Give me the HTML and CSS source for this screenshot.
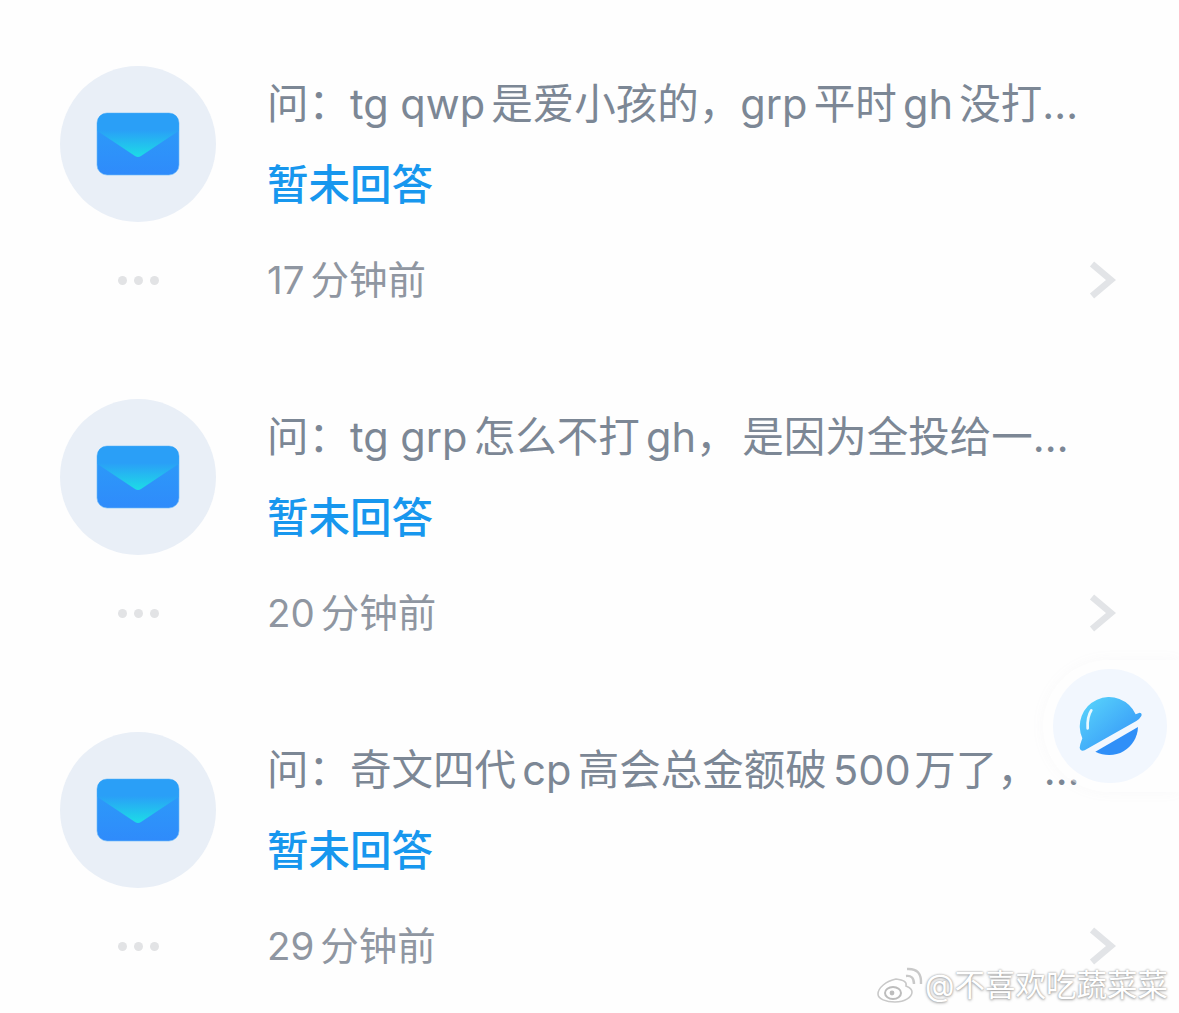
FILE: index.html
```html
<!DOCTYPE html>
<html lang="zh-CN">
<head>
<meta charset="utf-8">
<title>问答</title>
<link rel="stylesheet" href="styles.css">
</head>
<body>
<svg class="defs" width="0" height="0" aria-hidden="true">
  <defs>
    <linearGradient id="envBody" x1="0" y1="0" x2="0" y2="1"><stop offset="0" stop-color="#2b9ef8"/><stop offset="1" stop-color="#2f8bfb"/></linearGradient>
    <linearGradient id="envFlap" gradientUnits="userSpaceOnUse" x1="0" y1="18" x2="0" y2="46"><stop offset="0" stop-color="#2a9ff7"/><stop offset="1" stop-color="#1cdfe6"/></linearGradient>
    <linearGradient id="planetTop" gradientUnits="userSpaceOnUse" x1="170" y1="140" x2="300" y2="290"><stop offset="0" stop-color="#58d3fb"/><stop offset="1" stop-color="#3596f8"/></linearGradient>
    <symbol id="envelope" viewBox="0 0 84 64">
      <rect x="1" y="1" width="82" height="62" rx="10" fill="url(#envBody)" stroke="#6fbcf9" stroke-opacity=".6" stroke-width="1"/>
      <path d="M1.5 19 L39 44 Q42 46 45 44 L82.5 19 L82.5 11 Q82.5 1.5 73 1.5 L11 1.5 Q1.5 1.5 1.5 11 Z" fill="url(#envFlap)"/>
    </symbol>
    <symbol id="chevron" viewBox="0 0 28 40">
      <path d="M4 4 L23 20 L4 36" fill="none" stroke="#e2e4e7" stroke-width="6.5"/>
    </symbol>
  </defs>
</svg>
<main class="list">
  <article class="item">
    <div class="side">
      <div class="avatar"><svg class="mail"><use href="#envelope"/></svg></div>
      <div class="dots"><i></i><i></i><i></i></div>
    </div>
    <div class="body">
      <p class="question">问：tg qwp<span class="sp">&#8202;</span>是爱小孩的，grp<span class="sp">&#8202;</span>平时<span class="sp">&#8202;</span>gh<span class="sp">&#8202;</span>没打…</p>
      <p class="status">暂未回答</p>
      <div class="meta"><span class="time">17<span class="sp-t">&#8202;</span>分钟前</span><svg class="chev"><use href="#chevron"/></svg></div>
    </div>
  </article>
  <article class="item">
    <div class="side">
      <div class="avatar"><svg class="mail"><use href="#envelope"/></svg></div>
      <div class="dots"><i></i><i></i><i></i></div>
    </div>
    <div class="body">
      <p class="question">问：tg grp<span class="sp">&#8202;</span>怎么不打<span class="sp">&#8202;</span>gh，<span class="sp-l">&#8202;</span>是因为全投给一…</p>
      <p class="status">暂未回答</p>
      <div class="meta"><span class="time">20<span class="sp-t">&#8202;</span>分钟前</span><svg class="chev"><use href="#chevron"/></svg></div>
    </div>
  </article>
  <article class="item">
    <div class="side">
      <div class="avatar"><svg class="mail"><use href="#envelope"/></svg></div>
      <div class="dots"><i></i><i></i><i></i></div>
    </div>
    <div class="body">
      <p class="question">问：奇文四代<span class="sp">&#8202;</span>cp<span class="sp">&#8202;</span>高会总金额破<span class="sp">&#8202;</span>500&#8202;万了，<span class="sp-l">&#8202;</span>…</p>
      <p class="status">暂未回答</p>
      <div class="meta"><span class="time">29<span class="sp-t">&#8202;</span>分钟前</span><svg class="chev"><use href="#chevron"/></svg></div>
    </div>
  </article>
</main>
<div class="float">
  <div class="float-inner">
    <svg class="planet" viewBox="145 135 195 180" width="65" height="60">
      <path d="M158 262 A87 87 0 1 1 318 190 L330 185 Q338 186 335 195 Q330 204 320 210 L165 298 Q152 302 150 290 Q151 280 158 262 Z" fill="url(#planetTop)"/>
      <path d="M325 228 A87 87 0 0 1 197 302 Z" fill="#2f8ff8"/>
      <path d="M174 232 Q172 198 185 178" fill="none" stroke="#e8f9ff" stroke-width="8" stroke-linecap="round"/>
    </svg>
  </div>
</div>
<div class="mark">
  <svg class="weibo" viewBox="0 0 46 36" width="46" height="36">
    <path d="M19 12 C9 14 1 21 1 27 C1 32 9 35 18 35 C28 35 35 30 35 25 C35 21 31 20 29 19 C30 15 27 13 19 12 Z" fill="#fff" stroke="#c9c9c9" stroke-width="1.6"/>
    <ellipse cx="16" cy="26" rx="8" ry="6" fill="none" stroke="#bdbdbd" stroke-width="2"/>
    <circle cx="15" cy="26" r="2.4" fill="#bdbdbd"/>
    <path d="M29 9 Q37 8 37 17 M30 2 Q45 1 44 17" fill="none" stroke="#c9c9c9" stroke-width="2.4"/>
  </svg>
  <span class="mark-text">@不喜欢吃蔬菜菜</span>
</div>
</body>
</html>
```
FILE: styles.css
```css
html, body { margin: 0; padding: 0; }
body {
  width: 1179px;
  height: 1013px;
  overflow: hidden;
  position: relative;
  background: #fefefe;
  font-family: Inter, "Noto Sans CJK SC", sans-serif;
}
.defs { position: absolute; }
.list { display: flex; flex-direction: column; gap: 33px; padding: 66px 0 0 60px; }
.item { display: flex; gap: 51px; height: 300px; }
.side { display: flex; flex-direction: column; align-items: center; width: 156px; flex: none; }
.avatar {
  width: 156px; height: 156px; border-radius: 50%;
  background: #e9eff7;
  display: flex; align-items: center; justify-content: center;
}
.mail { width: 84px; height: 64px; }
.dots { display: flex; gap: 7px; margin-top: 54px; }
.dots i { width: 9px; height: 9px; border-radius: 50%; background: #e2e3e5; }
.body { width: 830px; display: flex; flex-direction: column; }
.question {
  margin: 10px 0 0;
  font-size: 41.5px; line-height: 56px; color: #7c8795;
  white-space: nowrap;
}
.sp { letter-spacing: 2.5px; }
.sp-l { letter-spacing: 1px; }
.status {
  margin: 25px 0 0;
  font-size: 41.5px; line-height: 56px; color: #1797ee; font-weight: 500;
}
.meta { display: flex; align-items: center; justify-content: space-between; margin-top: 43px; width: 849px; }
.time { font-size: 38.5px; line-height: 48px; color: #8f96a1; }
.sp-t { letter-spacing: 2.5px; }
.chev { width: 28px; height: 40px; }
.float {
  position: absolute; left: 1043px; top: 660px;
  width: 136px; height: 132px;
  border-radius: 66px 0 0 66px;
  background: rgba(255, 255, 255, .45);
  box-shadow: 0 0 14px rgba(150, 160, 180, .05);
  display: flex; align-items: center; padding-left: 10px; box-sizing: border-box;
}
.float-inner {
  width: 114px; height: 114px; border-radius: 50%;
  background: #f2f7fe;
  display: flex; align-items: center; justify-content: center;
}
.mark { position: absolute; left: 877px; top: 965px; display: flex; align-items: center; gap: 2px; }
.mark-text {
  font-size: 30.5px; line-height: 40px; color: #fff;
  text-shadow: 0 0 2px #9a9a9a, 0 1px 3px #aaa;
}
```
